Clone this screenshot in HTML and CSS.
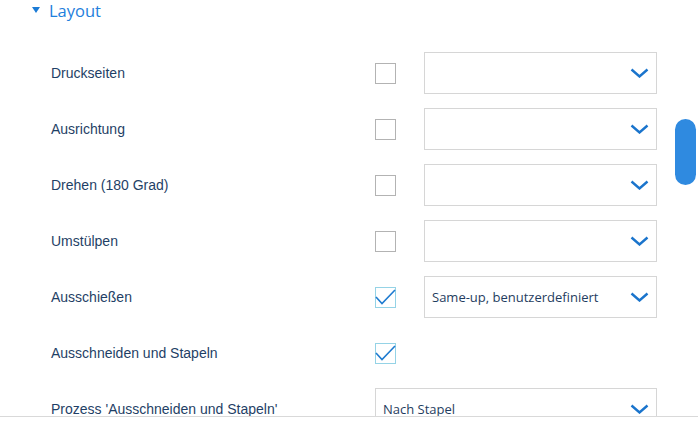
FILE: index.html
```html
<!DOCTYPE html>
<html lang="de">
<head>
<meta charset="utf-8">
<title>Layout</title>
<link rel="stylesheet" href="styles.css">
</head>
<body>
<div class="panel">
  <div class="section-header">
    <span class="caret"></span>
    <span class="section-title">Layout</span>
  </div>
  <div class="rows">
    <div class="row">
      <span class="label">Druckseiten</span>
      <span class="checkbox"></span>
      <div class="select"><span class="select-text"></span><svg class="chev" viewBox="0 0 19 10" width="19" height="10"><polyline points="1.5,1.5 9.5,8.5 17.5,1.5"/></svg></div>
    </div>
    <div class="row">
      <span class="label">Ausrichtung</span>
      <span class="checkbox"></span>
      <div class="select"><span class="select-text"></span><svg class="chev" viewBox="0 0 19 10" width="19" height="10"><polyline points="1.5,1.5 9.5,8.5 17.5,1.5"/></svg></div>
    </div>
    <div class="row">
      <span class="label">Drehen (180 Grad)</span>
      <span class="checkbox"></span>
      <div class="select"><span class="select-text"></span><svg class="chev" viewBox="0 0 19 10" width="19" height="10"><polyline points="1.5,1.5 9.5,8.5 17.5,1.5"/></svg></div>
    </div>
    <div class="row">
      <span class="label">Umstülpen</span>
      <span class="checkbox"></span>
      <div class="select"><span class="select-text"></span><svg class="chev" viewBox="0 0 19 10" width="19" height="10"><polyline points="1.5,1.5 9.5,8.5 17.5,1.5"/></svg></div>
    </div>
    <div class="row">
      <span class="label">Ausschießen</span>
      <span class="checkbox checked"><svg class="tick" viewBox="0 0 21 21" width="21" height="21"><polyline points="1,10 7,16.5 20,3"/></svg></span>
      <div class="select"><span class="select-text">Same-up, benutzerdefiniert</span><svg class="chev" viewBox="0 0 19 10" width="19" height="10"><polyline points="1.5,1.5 9.5,8.5 17.5,1.5"/></svg></div>
    </div>
    <div class="row">
      <span class="label">Ausschneiden und Stapeln</span>
      <span class="checkbox checked"><svg class="tick" viewBox="0 0 21 21" width="21" height="21"><polyline points="1,10 7,16.5 20,3"/></svg></span>
    </div>
    <div class="row">
      <span class="label">Prozess 'Ausschneiden und Stapeln'</span>
      <div class="select wide"><span class="select-text">Nach Stapel</span><svg class="chev" viewBox="0 0 19 10" width="19" height="10"><polyline points="1.5,1.5 9.5,8.5 17.5,1.5"/></svg></div>
    </div>
  </div>
  <div class="scroll-thumb"></div>
</div>
</body>
</html>
```

FILE: styles.css
```css
html, body {
  margin: 0;
  padding: 0;
  background: #ffffff;
}

body {
  font-family: "Liberation Sans", Arial, sans-serif;
  width: 698px;
  height: 428px;
  overflow: hidden;
}

.panel {
  position: relative;
  height: 416px;
  overflow: hidden;
  border-bottom: 1px solid #d9d9d9;
}

.section-header {
  height: 45px;
  display: flex;
  align-items: flex-start;
  padding-left: 32px;
  box-sizing: border-box;
}

.caret {
  width: 0;
  height: 0;
  border-left: 4.5px solid transparent;
  border-right: 4.5px solid transparent;
  border-top: 6px solid #1b7bd6;
  margin-top: 7px;
}

.section-title {
  font-family: "Open Sans", "Noto Sans", sans-serif;
  font-size: 16.5px;
  color: #1f80dc;
  margin-left: 9px;
  line-height: 22px;
}

.rows {
  display: flex;
  flex-direction: column;
}

.row {
  height: 56px;
  display: grid;
  grid-template-columns: 324px 49px 233px;
  align-items: center;
  padding-left: 51px;
}

.label {
  font-size: 14px;
  color: #1f3f66;
}

.checkbox {
  width: 21px;
  height: 21px;
  box-sizing: border-box;
  border: 1px solid #b3b3b3;
  position: relative;
}

.checkbox.checked {
  border-color: #95d3e6;
}

.tick {
  position: absolute;
  left: -1px;
  top: -1px;
  fill: none;
  stroke: #1f7bd0;
  stroke-width: 1.6;
}

.select {
  height: 42px;
  box-sizing: border-box;
  border: 1px solid #d6d6d6;
  display: flex;
  align-items: center;
  justify-content: space-between;
  padding: 0 7px 0 7px;
}

.select.wide {
  grid-column: 2 / 4;
}

.select-text {
  font-family: "Open Sans", "Noto Sans", sans-serif;
  font-size: 13px;
  color: #1f3d60;
}

.chev {
  fill: none;
  stroke: #1a74cc;
  stroke-width: 2.4;
  stroke-linecap: butt;
}

.scroll-thumb {
  position: absolute;
  right: 2px;
  top: 119px;
  width: 21px;
  height: 66px;
  border-radius: 10.5px;
  background: #2f8ae0;
}
```
